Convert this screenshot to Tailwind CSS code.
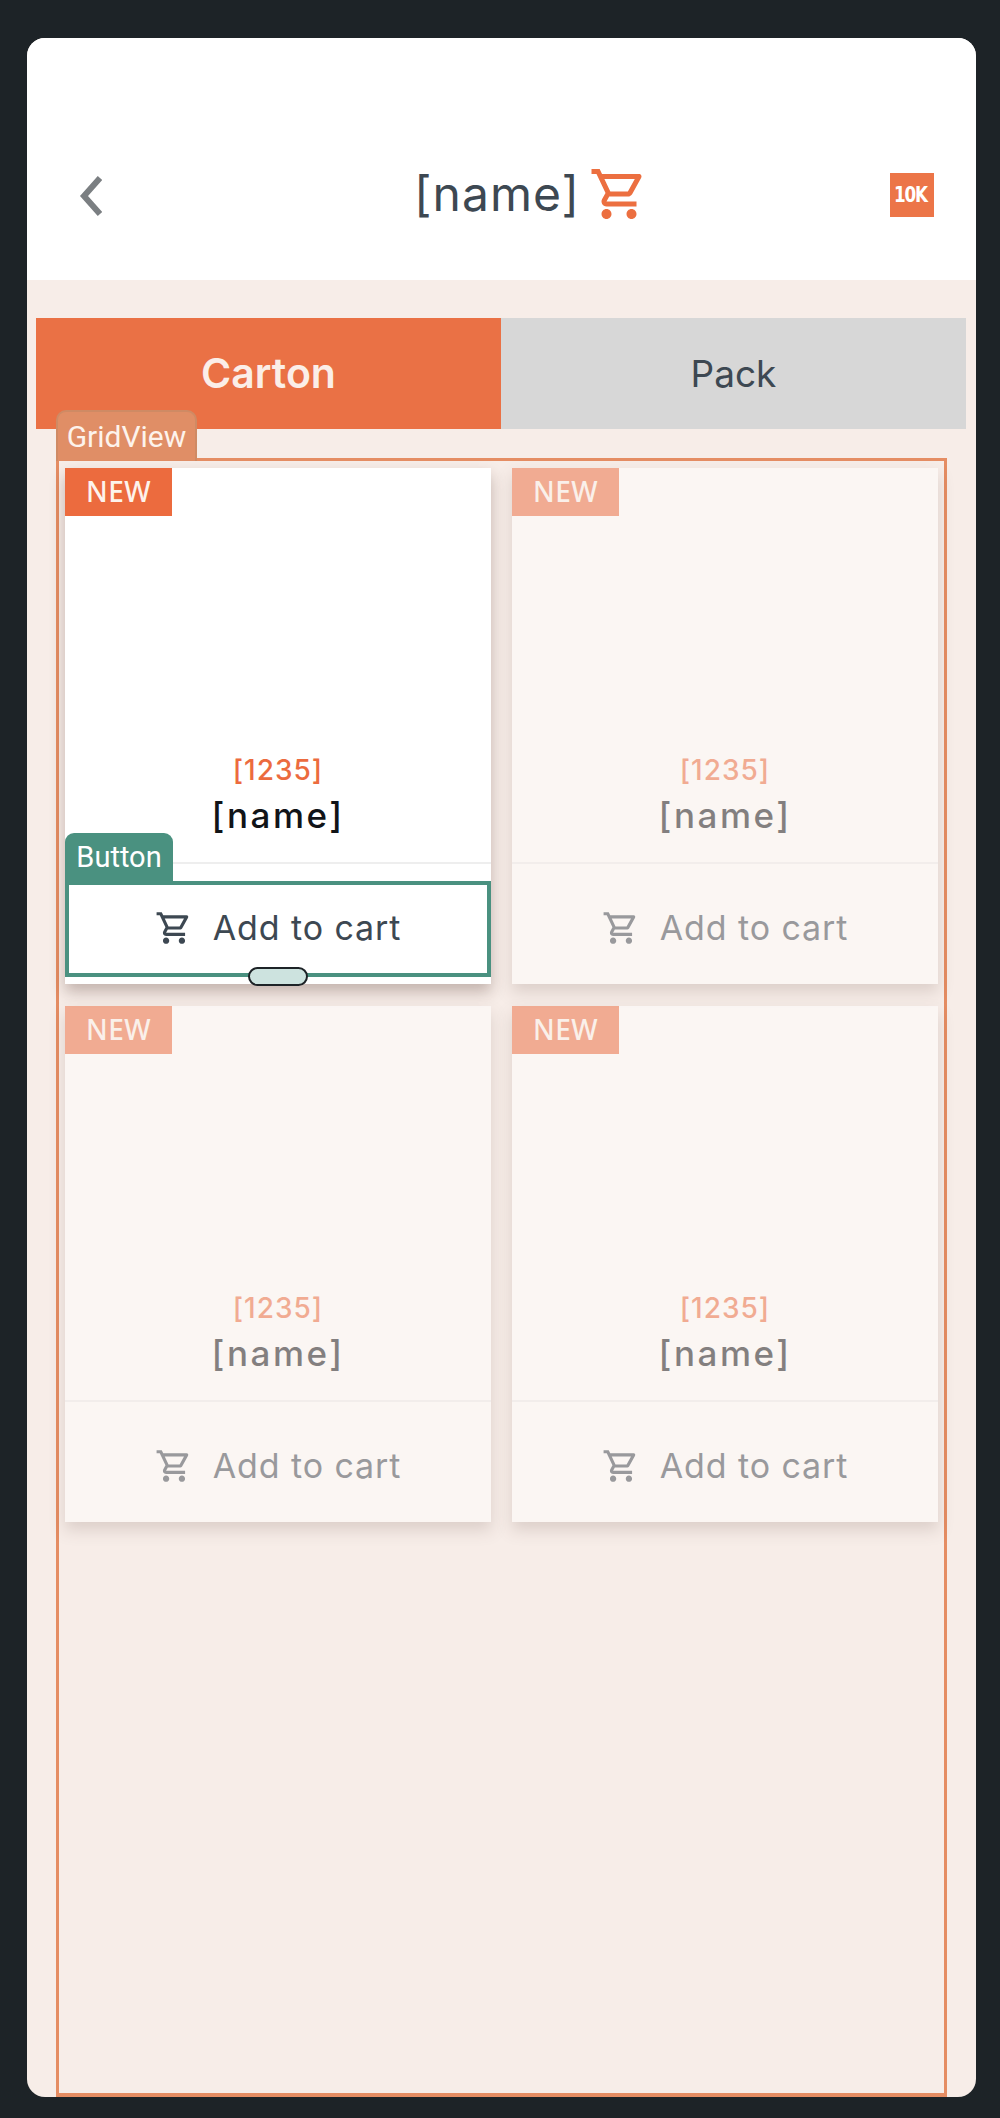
<!DOCTYPE html>
<html lang="en">
<head>
    <meta charset="UTF-8">
    <meta name="viewport" content="width=device-width, initial-scale=1.0">
    <title>Product Grid</title>
    <script src="https://cdn.jsdelivr.net/npm/@tailwindcss/browser@4"></script>
</head>
<body class="bg-[#1d2327] h-[2118px] overflow-hidden font-['Inter',sans-serif]">
    <div class="pt-[38px] pl-[27px] pr-[24px]">
        <div class="h-[2059px] rounded-[18px] overflow-hidden bg-[#f7ede8] flex flex-col">
            <!-- Header -->
            <div class="h-[242px] shrink-0 bg-white relative flex items-center justify-center pt-[82px]">
                <svg class="absolute left-[46px] top-[134px] w-[36px] h-[48px]" viewBox="0 0 36 48" fill="none" stroke="#7b7f82" stroke-width="6">
                    <path d="M27 6 L11 24 L27 42"/>
                </svg>
                <div class="flex items-center ml-[60px] mt-[-12px]">
                    <span class="text-[48px] leading-[60px] text-[#3d4852] tracking-[1px]">[name]</span>
                    <svg class="w-[60px] h-[60px] ml-[9px] fill-[#ec6f40]" viewBox="0 0 24 24">
                        <path d="M15.55 13c.75 0 1.41-.41 1.75-1.03l3.58-6.49c.37-.66-.11-1.48-.87-1.48H5.21l-.94-2H1v2h2l3.6 7.59-1.35 2.44C4.52 15.37 5.48 17 7 17h12v-2H7l1.1-2h7.45zM6.16 6h12.15l-2.76 5H8.53L6.16 6zM7 18c-1.1 0-1.99.9-1.99 2S5.9 22 7 22s2-.9 2-2-.9-2-2-2zm10 0c-1.1 0-1.99.9-1.99 2s.89 2 1.99 2 2-.9 2-2-.9-2-2-2z"/>
                    </svg>
                </div>
                <div class="absolute left-[863px] top-[135px] w-[44px] h-[44px] bg-[#ec7548] flex items-center justify-center pr-[3px] text-white font-bold text-[21px] leading-none font-['DejaVu_Sans',sans-serif] tracking-[-1.5px]"><span class="scale-x-[0.8]">10K</span></div>
            </div>

            <!-- Tabs -->
            <div class="mt-[38px] ml-[9px] mr-[10px] h-[111px] shrink-0 grid grid-cols-2">
                <div class="bg-[#ea7145] flex items-center justify-center text-[#fbeee8] text-[41px] font-semibold">Carton</div>
                <div class="bg-[#d7d7d7] flex items-center justify-center text-[#3d4852] text-[37px]">Pack</div>
            </div>

            <!-- GridView frame -->
            <div class="relative mt-[29px] mx-[29px] flex-1 border-[3px] border-b-[4px] border-[#e58d63] px-[6px] pt-[7px]">
                <div class="absolute left-[-3px] top-[-51px] w-[141px] h-[51px] rounded-t-[10px] bg-[#e08e66] border-2 border-b-0 border-[#cf8a64] flex items-center justify-center text-[#fdf3ec] text-[30px] font-['Roboto',sans-serif]">GridView</div>
                <div id="grid" class="grid grid-cols-2 gap-x-[21px] gap-y-[22px]"></div>
            </div>
        </div>
    </div>

    <script>
        const cartPath = 'M15.55 13c.75 0 1.41-.41 1.75-1.03l3.58-6.49c.37-.66-.11-1.48-.87-1.48H5.21l-.94-2H1v2h2l3.6 7.59-1.35 2.44C4.52 15.37 5.48 17 7 17h12v-2H7l1.1-2h7.45zM6.16 6h12.15l-2.76 5H8.53L6.16 6zM7 18c-1.1 0-1.99.9-1.99 2S5.9 22 7 22s2-.9 2-2-.9-2-2-2zm10 0c-1.1 0-1.99.9-1.99 2s.89 2 1.99 2 2-.9 2-2-.9-2-2-2z';

        // Button overlay only sits on the first card
        const buttonOverlay = `
            <div class="absolute left-0 right-0 bottom-[7px] h-[96px] border-[4px] border-[#4a9180]"></div>
            <div class="absolute left-0 top-[365px] w-[108px] h-[50px] rounded-t-[9px] bg-[#4a9180] flex items-center justify-center text-white text-[29px] font-['Roboto',sans-serif]">Button</div>
            <div class="absolute left-[183px] top-[499px] w-[60px] h-[19px] rounded-full bg-[#cde3df] border-2 border-[#1d2327]"></div>
        `;

        function card(selected) {
            return `
                <div class="relative h-[516px] bg-white flex flex-col shadow-[0_8px_14px_rgba(60,30,20,0.28)] ${selected ? '' : 'opacity-50'}">
                    <div class="w-[107px] h-[48px] pb-[2px] bg-[#ec6b3e] flex items-center justify-center text-[#fdf3ec] text-[28px] font-medium tracking-[0.5px] font-['Noto_Sans',sans-serif]">NEW</div>
                    <div class="flex-1 flex flex-col justify-end items-center pb-[23px]">
                        <div class="text-[#ec6b3e] text-[28px] leading-[48px] mb-[-3px] font-medium tracking-[1px]">[1235]</div>
                        <div class="text-[#111418] text-[35px] leading-[48px] font-medium tracking-[2.5px]">[name]</div>
                    </div>
                    <div class="h-[122px] border-t-2 border-[#eeeeee] flex items-center justify-center gap-[20px] pt-[8px] text-[#3d4852]">
                        <svg class="w-[38px] h-[38px] fill-[#3d4852]" viewBox="0 0 24 24"><path d="${cartPath}"/></svg>
                        <span class="text-[34px] leading-none tracking-[0.9px]">Add to cart</span>
                    </div>
                    ${selected ? buttonOverlay : ''}
                </div>
            `;
        }

        document.getElementById('grid').innerHTML = [true, false, false, false].map(card).join('');
    </script>
</body>
</html>
